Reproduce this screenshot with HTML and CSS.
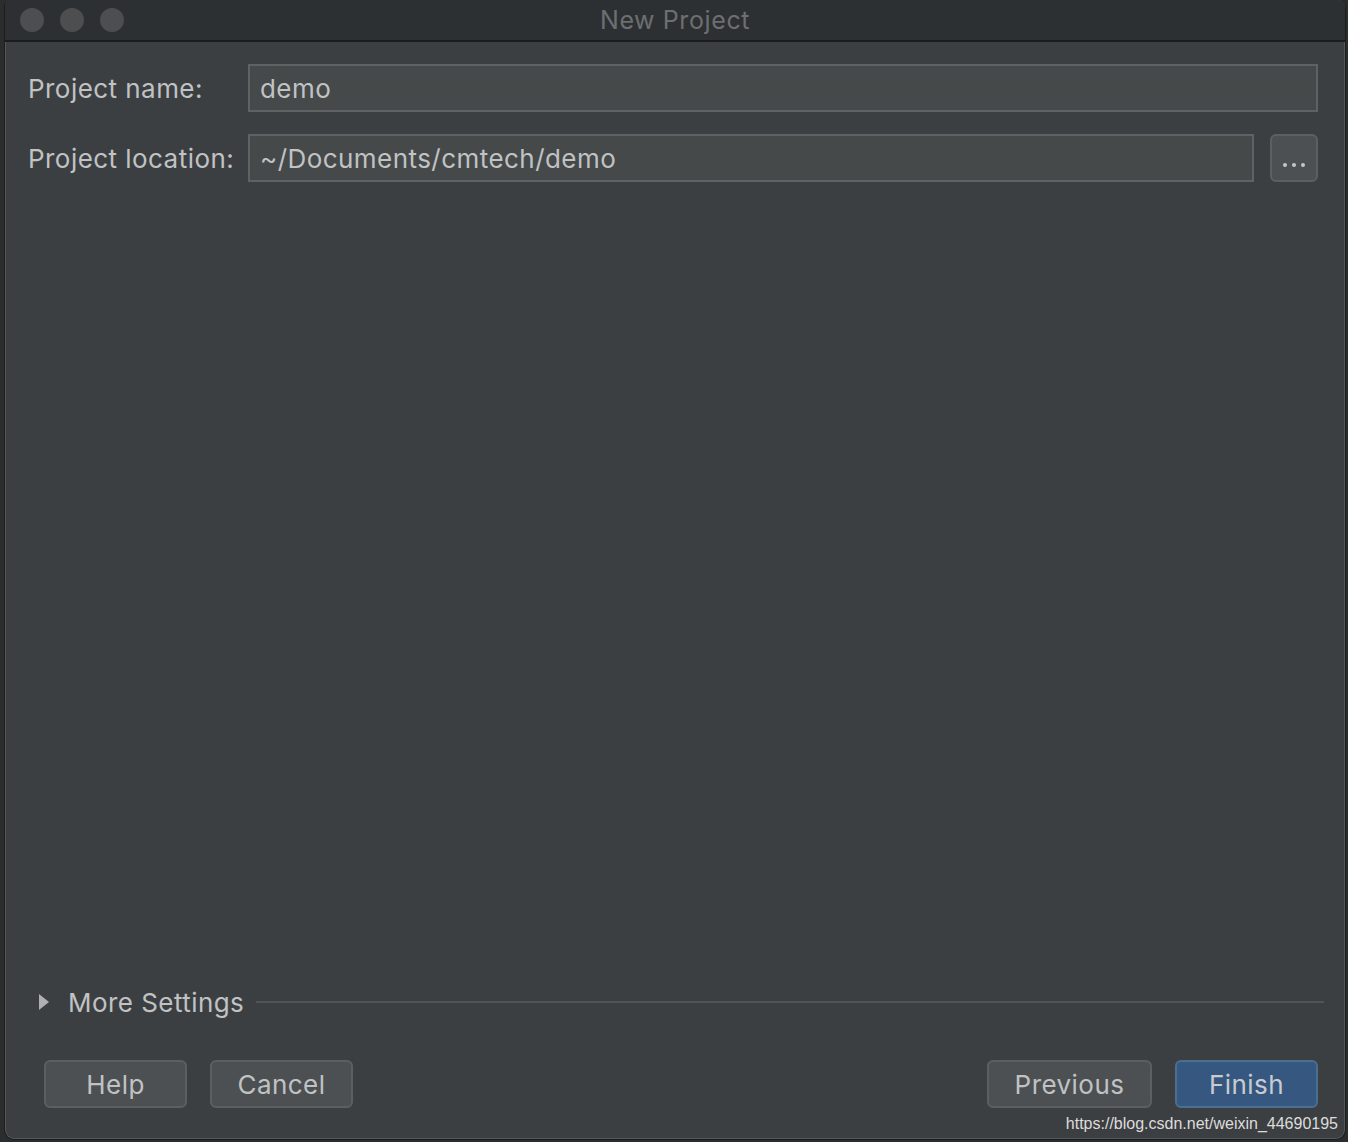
FILE: index.html
```html
<!DOCTYPE html>
<html>
<head>
<meta charset="utf-8">
<title>New Project</title>
<link rel="stylesheet" href="styles.css">
</head>
<body>
<div class="window">
  <div class="titlebar">
    <div class="lights">
      <span class="light"></span><span class="light"></span><span class="light"></span>
    </div>
    <div class="title">New Project</div>
  </div>
  <div class="content">
    <div class="form">
      <div class="row">
        <label class="label">Project name:</label>
        <div class="field">demo</div>
      </div>
      <div class="row">
        <label class="label">Project location:</label>
        <div class="field">~/Documents/cmtech/demo</div>
        <div class="browse">
          <svg width="24" height="6" viewBox="0 0 24 6"><circle cx="3" cy="3" r="2" fill="#c4c6c8"/><circle cx="12" cy="3" r="2" fill="#c4c6c8"/><circle cx="21" cy="3" r="2" fill="#c4c6c8"/></svg>
        </div>
      </div>
    </div>
    <div class="more">
      <svg class="arrow" width="10" height="16" viewBox="0 0 10 16"><path d="M0 0 L10 8 L0 16 Z" fill="#aeb0b2"/></svg>
      <span class="more-text">More Settings</span>
      <span class="more-line"></span>
    </div>
    <div class="buttons">
      <div class="group">
        <button class="btn">Help</button>
        <button class="btn">Cancel</button>
      </div>
      <div class="group">
        <button class="btn wide">Previous</button>
        <button class="btn primary">Finish</button>
      </div>
    </div>
  </div>
  <div class="watermark">https://blog.csdn.net/weixin_44690195</div>
</div>
</body>
</html>
```
FILE: styles.css
```css
html, body {
  margin: 0;
  padding: 0;
  background: #2a2c2d;
  width: 1348px;
  height: 1142px;
  overflow: hidden;
}
.window {
  position: relative;
  box-sizing: border-box;
  margin-left: 4px;
  width: 1342px;
  height: 1140px;
  border: 1px solid #1c1d1f;
  border-top: none;
  border-radius: 6px 8px 10px 10px;
  box-shadow: inset 1px 0 0 #55585a, inset -1px 0 0 #55585a, inset 0 -1px 0 #55585a;
  background: #3c3f41;
  display: flex;
  flex-direction: column;
  font-family: "Inter", "Liberation Sans", sans-serif;
  color: #bbbbbb;
  overflow: hidden;
}
.titlebar {
  height: 40px;
  flex: 0 0 40px;
  background: #2d3032;
  border-bottom: 2px solid #1a1c1f;
  display: flex;
  align-items: center;
  position: relative;
}
.lights {
  display: flex;
  gap: 16px;
  padding-left: 15px;
}
.light {
  width: 24px;
  height: 24px;
  border-radius: 50%;
  background: #4c4e50;
}
.title {
  position: absolute;
  left: 0;
  right: 0;
  text-align: center;
  font-size: 25px;
  letter-spacing: 0.6px;
  color: #6c6f71;
  top: 5px;
}
.content {
  flex: 1;
  display: flex;
  flex-direction: column;
  padding: 22px 27px 31px 23px;
}
.form {
  display: flex;
  flex-direction: column;
  gap: 22px;
}
.row {
  display: flex;
  align-items: center;
  gap: 16px;
}
.label {
  width: 220px;
  flex: 0 0 220px;
  margin-right: -16px;
  font-size: 26px;
  letter-spacing: 0.45px;
  color: #c0c2c4;
}
.field {
  flex: 1;
  box-sizing: border-box;
  height: 48px;
  border: 2px solid #5f6264;
  background: #45494a;
  font-size: 26px;
  letter-spacing: 0.45px;
  padding-left: 10px;
  display: flex;
  align-items: center;
  color: #c0c2c4;
}
.browse {
  box-sizing: border-box;
  width: 48px;
  height: 48px;
  border: 2px solid #5c5f61;
  border-radius: 6px;
  background: #4c5052;
  display: flex;
  justify-content: center;
  align-items: flex-end;
  padding-bottom: 12px;
}
.more {
  margin-top: auto;
  display: flex;
  align-items: center;
  height: 32px;
  padding-left: 11px;
  margin-right: -6px;
}
.arrow {
  flex: 0 0 10px;
}
.more-text {
  font-size: 26px;
  letter-spacing: 0.45px;
  margin-left: 19px;
  color: #c0c2c4;
}
.more-line {
  flex: 1;
  height: 2px;
  background: #515456;
  margin-left: 12px;
}
.buttons {
  margin-top: 42px;
  display: flex;
  justify-content: space-between;
  padding-left: 16px;
}
.group {
  display: flex;
  gap: 23px;
}
.btn {
  box-sizing: border-box;
  width: 143px;
  height: 48px;
  border: 2px solid #5c5f61;
  border-radius: 6px;
  background: #4c5052;
  font-family: "Inter", "Liberation Sans", sans-serif;
  font-size: 26px;
  letter-spacing: 0.45px;
  color: #c0c2c4;
  padding: 0;
}
.btn.wide {
  width: 165px;
}
.btn.primary {
  background: #365880;
  border-color: #4b6f93;
  color: #c8ccd0;
}
.watermark {
  position: absolute;
  right: 7px;
  bottom: 6px;
  font-family: "Liberation Sans", Arial, sans-serif;
  font-size: 16px;
  color: #dcdcdc;
}
```
